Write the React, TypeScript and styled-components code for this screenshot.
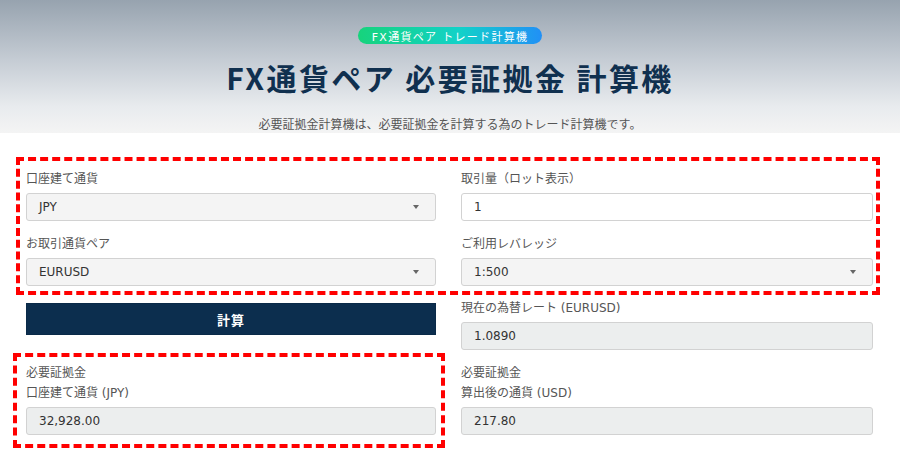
import React from 'react';
import styled, { createGlobalStyle } from 'styled-components';

const GlobalStyle = createGlobalStyle`
  body {
    margin: 0;
    background: #fff;
    font-family: "DejaVu Sans", "Noto Sans CJK JP", sans-serif;
    color: #333;
  }
`;

const Header = styled.header`
  height: 133px;
  padding-top: 27px;
  box-sizing: border-box;
  display: flex;
  flex-direction: column;
  align-items: center;
  background: linear-gradient(180deg, #97a3af 0%, #c5ccd4 45%, #e8ebee 80%, #f4f4f4 100%);
`;

const Badge = styled.div`
  height: 20px;
  padding: 0 14px;
  border-radius: 10px;
  display: flex;
  align-items: center;
  font-size: 11px;
  letter-spacing: 1.3px;
  color: #fff;
  background: linear-gradient(90deg, #17d37c 0%, #12d2c8 55%, #2190f6 100%);
`;

const Title = styled.h1`
  margin: 15px 0 0;
  font-family: "Noto Sans CJK JP", sans-serif;
  font-size: 30px;
  line-height: 36px;
  font-weight: 700;
  letter-spacing: 2.4px;
  color: #10304f;
`;

const Lead = styled.p`
  margin: 20px 0 0;
  font-family: "Noto Sans CJK JP", sans-serif;
  font-size: 12px;
  line-height: 18px;
  color: #555;
`;

const Main = styled.main`
  padding: 0 27px 0 26px;
`;

const Annotation = styled.div<{ $margin: string; $pad: string }>`
  margin: ${(p) => p.$margin};
  padding: ${(p) => p.$pad};
  border: 4px dashed #ff0000;
`;

const Grid = styled.div<{ $top?: number; $rowGap?: number }>`
  display: grid;
  grid-template-columns: 410px 1fr;
  column-gap: 25px;
  row-gap: ${(p) => p.$rowGap ?? 0}px;
  align-items: start;
  margin-top: ${(p) => p.$top ?? 0}px;
`;

const Field = styled.div<{ $top?: number }>`
  display: flex;
  flex-direction: column;
  margin-top: ${(p) => p.$top ?? 0}px;
`;

const Label = styled.label<{ $gap?: number }>`
  font-size: 12px;
  line-height: 20px;
  color: #555;
  margin-bottom: ${(p) => p.$gap ?? 4}px;
`;

const Control = styled.div<{ $variant: 'select' | 'input' | 'readonly' }>`
  position: relative;
  height: 28px;
  box-sizing: border-box;
  padding: 0 12px;
  display: flex;
  align-items: center;
  font-size: 12px;
  color: #333;
  border: 1px solid #d2d2d2;
  border-radius: 3px;
  background: ${(p) =>
    p.$variant === 'select' ? '#f4f4f4' : p.$variant === 'input' ? '#fff' : '#eceeee'};
`;

const Caret = styled.span`
  position: absolute;
  right: 16px;
  top: 11px;
  width: 0;
  height: 0;
  border-left: 3px solid transparent;
  border-right: 3px solid transparent;
  border-top: 4px solid #666;
`;

const Button = styled.button`
  margin-top: 8px;
  height: 32px;
  border: 1px solid #0a2a48;
  background: #0c2e4e;
  color: #fff;
  font-family: "Noto Sans CJK JP", sans-serif;
  font-size: 13px;
  font-weight: 700;
  letter-spacing: 1px;
  cursor: pointer;
`;

const Select = ({ value }: { value: string }) => (
  <Control $variant="select">
    {value}
    <Caret />
  </Control>
);

export default function App() {
  return (
    <>
      <GlobalStyle />
      <Header>
        <Badge>FX通貨ペア トレード計算機</Badge>
        <Title>FX通貨ペア 必要証拠金 計算機</Title>
        <Lead>必要証拠金計算機は、必要証拠金を計算する為のトレード計算機です。</Lead>
      </Header>
      <Main>
        <Annotation $margin="24px -7px 0 -10px" $pad="8px 3px 5px 6px">
          <Grid $rowGap={13}>
            <Field>
              <Label>口座建て通貨</Label>
              <Select value="JPY" />
            </Field>
            <Field>
              <Label>取引量（ロット表示）</Label>
              <Control $variant="input">1</Control>
            </Field>
            <Field>
              <Label>お取引通貨ペア</Label>
              <Select value="EURUSD" />
            </Field>
            <Field>
              <Label>ご利用レバレッジ</Label>
              <Select value="1:500" />
            </Field>
          </Grid>
        </Annotation>
        <Grid>
          <Button>計算</Button>
          <Field $top={3}>
            <Label>現在の為替レート (EURUSD)</Label>
            <Control $variant="readonly">1.0890</Control>
          </Field>
        </Grid>
        <Grid $top={3}>
          <Annotation $margin="0 -9px 0 -13px" $pad="6px 5px 9px 9px">
            <Field>
              <Label $gap={0}>必要証拠金</Label>
              <Label>口座建て通貨 (JPY)</Label>
              <Control $variant="readonly">32,928.00</Control>
            </Field>
          </Annotation>
          <Field $top={10}>
            <Label $gap={0}>必要証拠金</Label>
            <Label>算出後の通貨 (USD)</Label>
            <Control $variant="readonly">217.80</Control>
          </Field>
        </Grid>
      </Main>
    </>
  );
}
